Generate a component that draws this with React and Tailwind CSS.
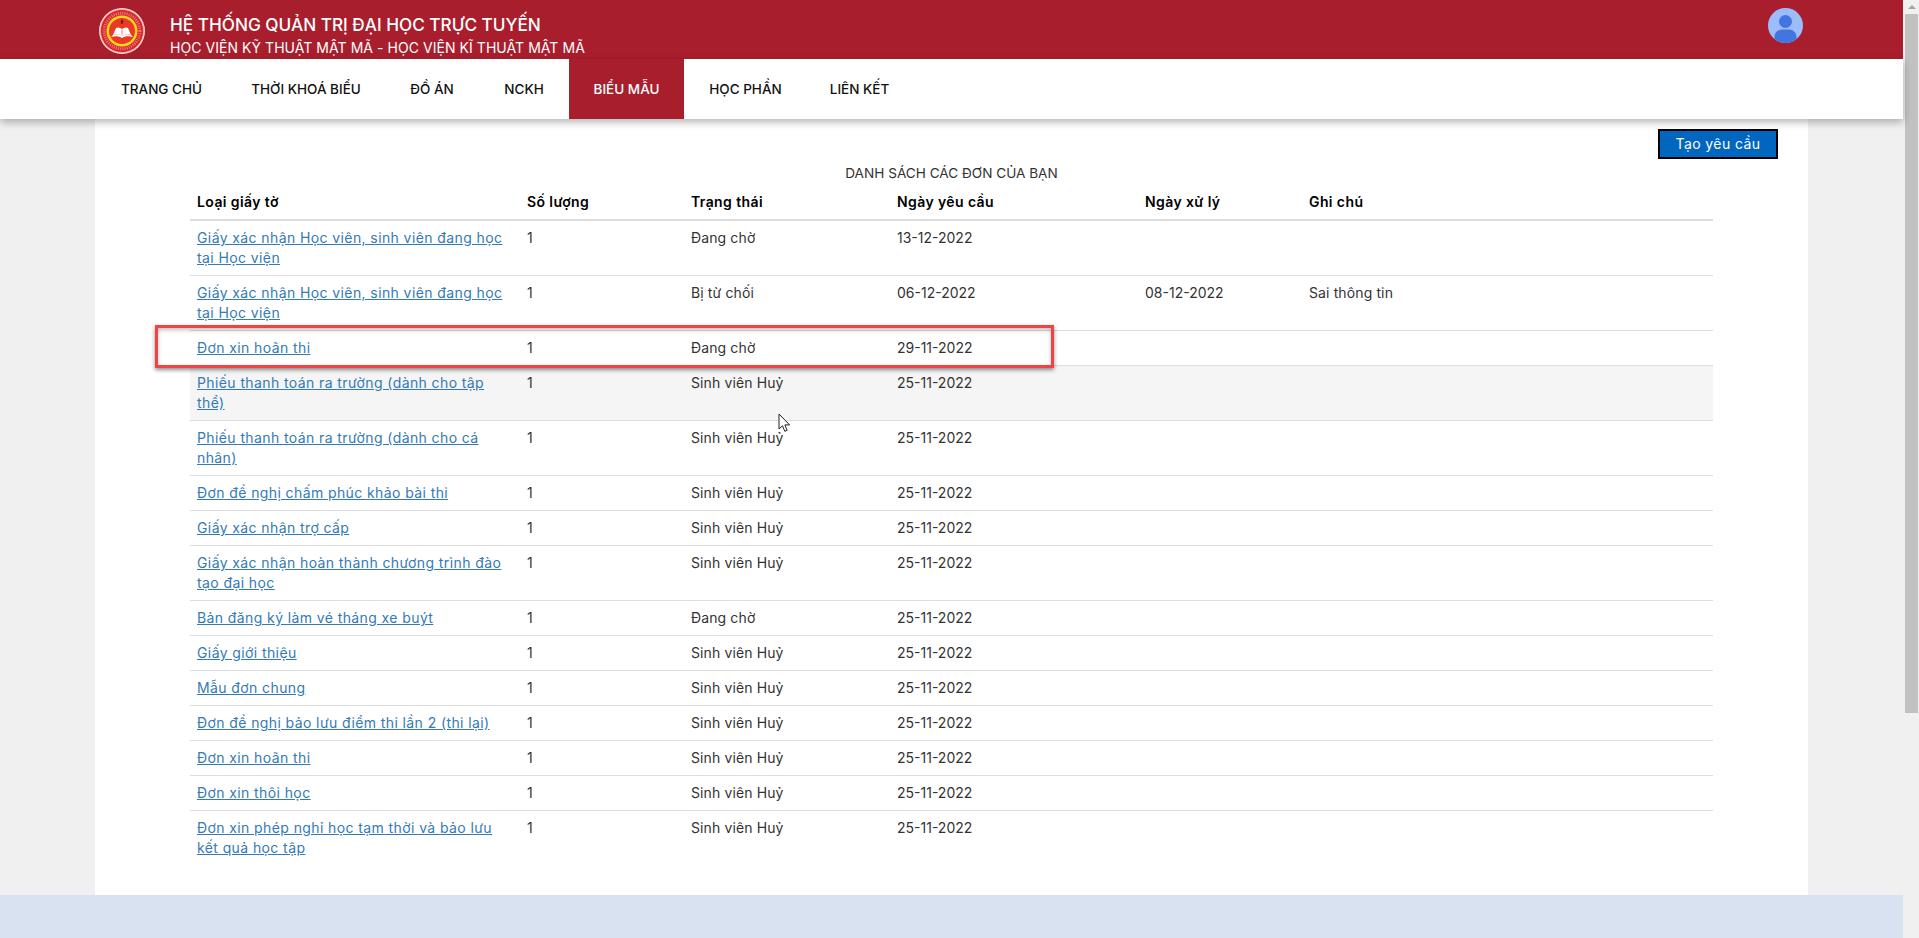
const rows = [
  { name: "Giấy xác nhận Học viên, sinh viên đang học tại Học viện", status: "Đang chờ", date: "13-12-2022" },
  { name: "Giấy xác nhận Học viên, sinh viên đang học tại Học viện", status: "Bị từ chối", date: "06-12-2022", done: "08-12-2022", note: "Sai thông tin" },
  { name: "Đơn xin hoãn thi", status: "Đang chờ", date: "29-11-2022" },
  { name: "Phiếu thanh toán ra trường (dành cho tập thể)", status: "Sinh viên Huỷ", date: "25-11-2022", hover: true },
  { name: "Phiếu thanh toán ra trường (dành cho cá nhân)", status: "Sinh viên Huỷ", date: "25-11-2022" },
  { name: "Đơn đề nghị chấm phúc khảo bài thi", status: "Sinh viên Huỷ", date: "25-11-2022" },
  { name: "Giấy xác nhận trợ cấp", status: "Sinh viên Huỷ", date: "25-11-2022" },
  { name: "Giấy xác nhận hoàn thành chương trình đào tạo đại học", status: "Sinh viên Huỷ", date: "25-11-2022" },
  { name: "Bản đăng ký làm vé tháng xe buýt", status: "Đang chờ", date: "25-11-2022" },
  { name: "Giấy giới thiệu", status: "Sinh viên Huỷ", date: "25-11-2022" },
  { name: "Mẫu đơn chung", status: "Sinh viên Huỷ", date: "25-11-2022" },
  { name: "Đơn đề nghị bảo lưu điểm thi lần 2 (thi lại)", status: "Sinh viên Huỷ", date: "25-11-2022" },
  { name: "Đơn xin hoãn thi", status: "Sinh viên Huỷ", date: "25-11-2022" },
  { name: "Đơn xin thôi học", status: "Sinh viên Huỷ", date: "25-11-2022" },
  { name: "Đơn xin phép nghỉ học tạm thời và bảo lưu kết quả học tập", status: "Sinh viên Huỷ", date: "25-11-2022" },
];

const navItems = [
  { label: "Trang chủ", w: "w-[131px]" },
  { label: "Thời khoá biểu", w: "w-[158px]" },
  { label: "Đồ án", w: "w-[94px]" },
  { label: "NCKH", w: "w-[90px]" },
  { label: "Biểu mẫu", w: "w-[115px]", active: true },
  { label: "Học phần", w: "w-[123px]" },
  { label: "Liên kết", w: "w-[105px]" },
];

function Logo() {
  return (
    <svg viewBox="0 0 46 46" className="w-[46px] h-[46px] shrink-0">
      <circle cx="23" cy="23" r="23" fill="#f6d9d2" />
      <circle cx="23" cy="23" r="21.5" fill="#d8262c" />
      <circle cx="23" cy="23" r="21.500" fill="none" stroke="#f3b3ad" strokeWidth="0.6" />
      <circle cx="23" cy="23" r="17.800" fill="none" stroke="#f6c9c0" strokeWidth="3" strokeDasharray="1 1.200" opacity="0.55" />
      <circle cx="23" cy="23" r="15.5" fill="#ffd51f" />
      <circle cx="23" cy="23" r="13" fill="#ea3a24" />
      <g transform="translate(0 2)">
        <path d="M23 26c-3-2-6-2-9-1l3-7c2-1 4-.5 6 1 2-1.500 4-2 6-1l3 7c-3-1-6-1-9 1z" fill="#fff" />
        <path d="M12 27l2-2c3-1 6-1 9 1 3-2 6-2 9-1l2 2c-4-1-8-1-11 1-3-2-7-2-11-1z" fill="#fff" />
        <path d="M23 19.500v5" stroke="#ea3a24" strokeWidth="0.7" />
      </g>
      <path d="M23 11l1.300 2.500-.6 2.500h-1.400l-.6-2.500z" fill="#7a1a16" />
    </svg>
  );
}

function Avatar() {
  return (
    <svg viewBox="0 0 35 35" className="w-[35px] h-[35px]">
      <clipPath id="avatarClip">
        <circle cx="17.500" cy="17.500" r="17.500" />
      </clipPath>
      <g clipPath="url(#avatarClip)">
        <rect width="35" height="35" fill="#9cbdfb" />
        <circle cx="17.500" cy="13.500" r="6.500" fill="#4375e0" />
        <path d="M6.500 35v-6c0-5 4-7.500 8-7.500h6c4 0 8 2.500 8 7.500v6z" fill="#4375e0" />
      </g>
    </svg>
  );
}

export default function App() {
  return (
    <div className="flex h-[938px] w-full overflow-hidden bg-[#f0f0f0] font-[Inter,sans-serif] text-[14px] leading-[20px] text-[#333] relative">
      <div className="flex flex-col w-[1903px] shrink-0">
        <header className="h-[59px] bg-[#a91e2c] flex items-start justify-between pl-[99px] pr-[100px] pt-[8px] shrink-0">
          <div className="flex items-start gap-[25px]">
            <Logo />
            <div className="text-white pt-[4px]">
              <div className="text-[17.2px] leading-[25px] font-medium">HỆ THỐNG QUẢN TRỊ ĐẠI HỌC TRỰC TUYẾN</div>
              <div className="text-[14px] leading-[20px] tracking-[0.05px] mt-[1px]">HỌC VIỆN KỸ THUẬT MẬT MÃ - HỌC VIỆN KĨ THUẬT MẬT MÃ</div>
            </div>
          </div>
          <Avatar />
        </header>

        <nav className="h-[60px] bg-white flex pl-[96px] shrink-0 relative z-10 shadow-[0_3px_8px_rgba(0,0,0,0.3)]">
          {navItems.map((item) => (
            <a
              key={item.label}
              className={`${item.w} flex items-center justify-center uppercase text-[13.5px] font-medium ${
                item.active ? "bg-[#a91e2c] text-white" : "text-[#111]"
              }`}
            >
              {item.label}
            </a>
          ))}
        </nav>

        <main className="flex-1 mx-[95px] bg-white pt-[10px]">
          <div className="flex justify-end pr-[30px]">
            <button className="w-[120px] h-[30px] bg-[#0066c0] border-2 border-black text-white text-[14px] tracking-[0.4px]">
              Tạo yêu cầu
            </button>
          </div>
          <div className="text-center mt-[4px] uppercase text-[13.6px]">Danh sách các đơn của bạn</div>
          <div className="px-[95px] mt-[2px]">
            <table className="w-full table-fixed border-collapse text-left tracking-[0.12px]">
              <thead>
                <tr className="border-b-2 border-[#ddd] tracking-[0.4px]">
                  <th className="w-[330px] px-[7px] py-[7px] font-semibold text-black">Loại giấy tờ</th>
                  <th className="w-[164px] px-[7px] py-[7px] font-semibold text-black">Số lượng</th>
                  <th className="w-[206px] px-[7px] py-[7px] font-semibold text-black">Trạng thái</th>
                  <th className="w-[248px] px-[7px] py-[7px] font-semibold text-black">Ngày yêu cầu</th>
                  <th className="w-[164px] px-[7px] py-[7px] font-semibold text-black">Ngày xử lý</th>
                  <th className="px-[7px] py-[7px] font-semibold text-black">Ghi chú</th>
                </tr>
              </thead>
              <tbody>
                {rows.map((row, i) => (
                  <tr key={i} className={`border-t border-[#ddd] first:border-t-0 align-top ${row.hover ? "bg-[#f5f5f5]" : ""}`}>
                    <td className="px-[7px] py-[7px]">
                      <a className="text-[#337ab7] underline tracking-[0.4px]">{row.name}</a>
                    </td>
                    <td className="px-[7px] py-[7px]">1</td>
                    <td className="px-[7px] py-[7px]">{row.status}</td>
                    <td className="px-[7px] py-[7px] tracking-normal">{row.date}</td>
                    <td className="px-[7px] py-[7px] tracking-normal">{row.done}</td>
                    <td className="px-[7px] py-[7px]">{row.note}</td>
                  </tr>
                ))}
              </tbody>
            </table>
          </div>
        </main>

        <footer className="h-[43px] bg-[#d9e2f0] shrink-0" />
      </div>

      {/* scrollbar */}
      <div className="w-[16px] shrink-0 pl-[2px] pr-[1px] flex flex-col">
        <div className="h-[14px] flex items-center justify-center">
          <div className="w-0 h-0 border-x-[4px] border-x-transparent border-b-[4px] border-b-[#a3a3a3]" />
        </div>
        <div className="h-[699px] bg-[#c1c1c1]" />
      </div>

      {/* annotation drawn over the screenshot */}
      <div className="absolute left-[155px] top-[325px] w-[899px] h-[43px] border-[3px] border-[#f04444] shadow-[0_2px_4px_rgba(0,0,0,0.45),inset_0_2px_4px_rgba(0,0,0,0.25)]" />

      <svg viewBox="0 0 13 20" className="absolute left-[778px] top-[413px] w-[13px] h-[20px]">
        <path d="M1 1v15l3.500-3.200 2.300 5.500 2.400-1-2.300-5.400h4.700z" fill="#fff" stroke="#222" strokeWidth="1" strokeLinejoin="round" />
      </svg>
    </div>
  );
}
